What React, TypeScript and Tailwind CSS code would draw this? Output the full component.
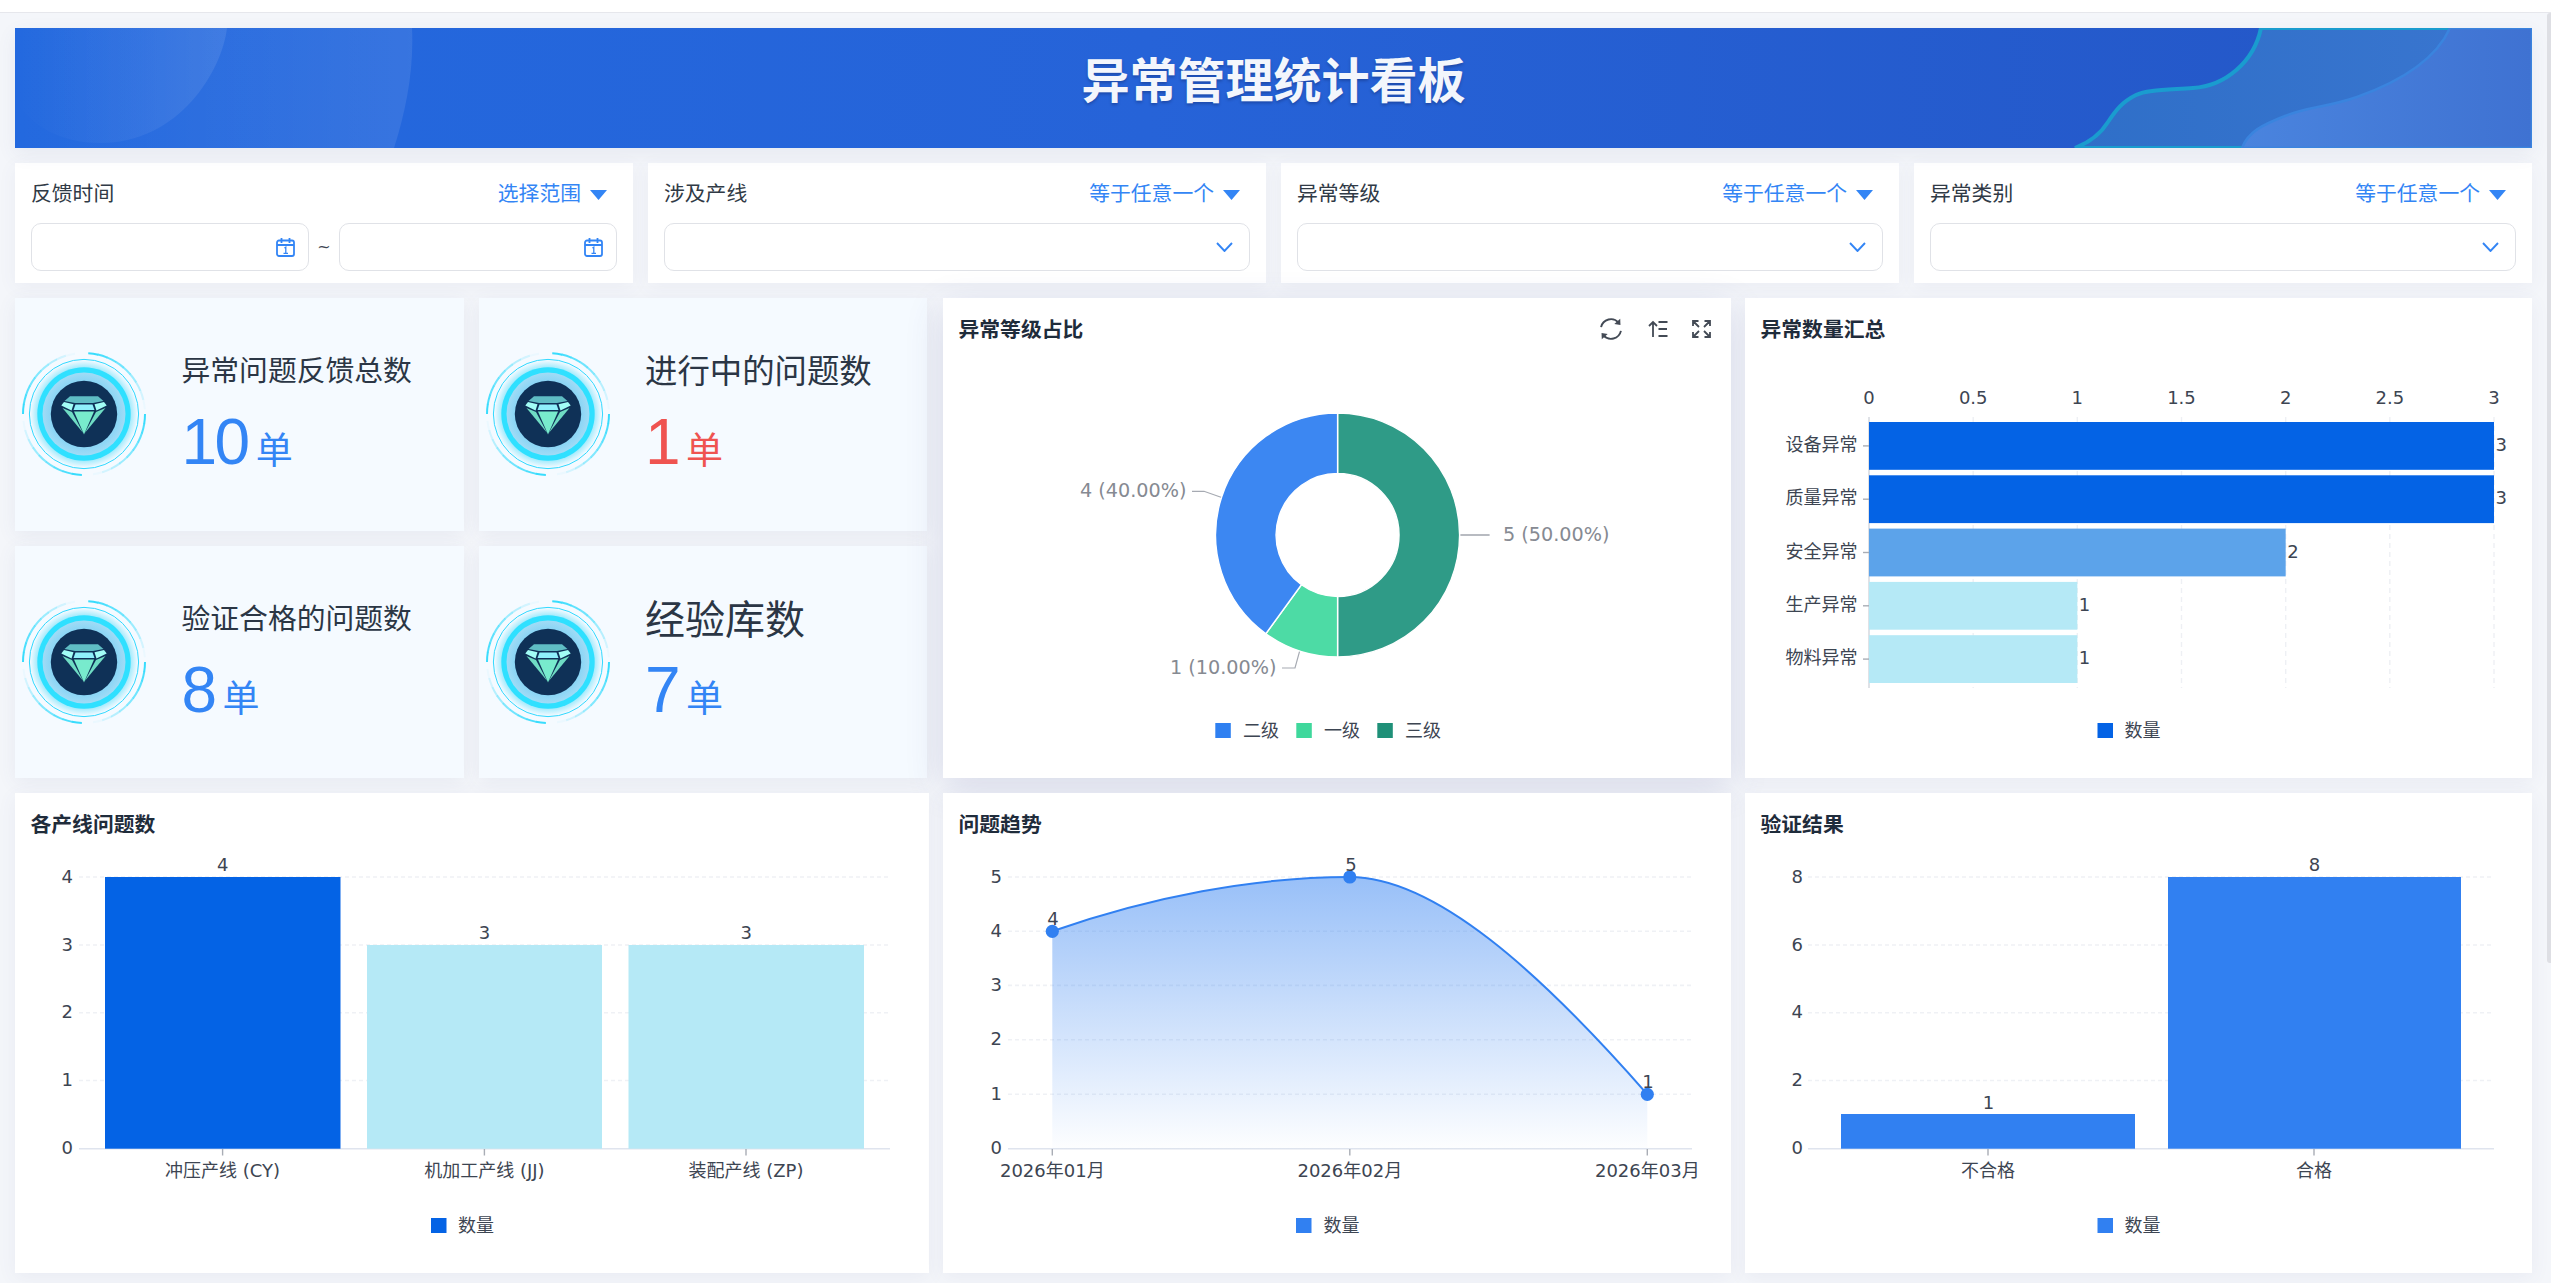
import React from "react";

const CYAN = "#38dcfd";
const BLUE = "#3180f1";
const AXIS_TEXT = "text-[18px] fill-[#3d4552]";

function polar(cx: number, cy: number, r: number, deg: number) {
  const a = ((deg - 90) * Math.PI) / 180;
  return [cx + r * Math.cos(a), cy + r * Math.sin(a)];
}

function arc(cx: number, cy: number, r: number, from: number, to: number) {
  const [x1, y1] = polar(cx, cy, r, from);
  const [x2, y2] = polar(cx, cy, r, to);
  return `M${x1} ${y1}A${r} ${r} 0 ${to - from > 180 ? 1 : 0} 1 ${x2} ${y2}`;
}

function donutSlice(cx: number, cy: number, r: number, r0: number, from: number, to: number) {
  const [x1, y1] = polar(cx, cy, r, from);
  const [x2, y2] = polar(cx, cy, r, to);
  const [x3, y3] = polar(cx, cy, r0, to);
  const [x4, y4] = polar(cx, cy, r0, from);
  const large = to - from > 180 ? 1 : 0;
  return `M${x1} ${y1}A${r} ${r} 0 ${large} 1 ${x2} ${y2}L${x3} ${y3}A${r0} ${r0} 0 ${large} 0 ${x4} ${y4}Z`;
}

function GemIcon() {
  const starts = [4, 90, 182, 270];
  return (
    <svg width="130" height="130" viewBox="-65 -65 130 130" className="shrink-0">
      <defs>
        <radialGradient id="gemGlow" gradientUnits="userSpaceOnUse" cx="0" cy="0" r="54">
          <stop offset="0.85" stopColor="#7fe4fb" stopOpacity="0.75" />
          <stop offset="1" stopColor="#7fe4fb" stopOpacity="0" />
        </radialGradient>
        <radialGradient id="gemInner" gradientUnits="userSpaceOnUse" cx="0" cy="0" r="42">
          <stop offset="0.75" stopColor="#85d4f5" />
          <stop offset="1" stopColor="#a3dcf6" />
        </radialGradient>
      </defs>
      {starts.map((s) =>
        [0, 1, 2, 3, 4, 5, 6, 7, 8].map((i) => (
          <path
            key={`${s}-${i}`}
            d={arc(0, 0, 61, s + i * 9, s + (i + 1) * 9 + 0.5)}
            fill="none"
            stroke={CYAN}
            strokeWidth="2"
            opacity={i < 4 ? 1 - i * 0.1 : 0.75 - (i - 3) * 0.14}
          />
        ))
      )}
      <circle r="54.6" fill="none" stroke="#2fd9ff" strokeWidth="1" />
      <circle r="54" fill="url(#gemGlow)" />
      <circle r="46.7" fill="#2fe0ff" />
      <circle r="41.5" fill="url(#gemInner)" />
      <circle r="33.2" fill="#0f3157" />
      <polygon points="-14,-17.7 14,-17.7 19.5,-13 9,-11 -9,-11 -19.5,-13" fill="#5fbdc4" />
      <polygon points="-8.5,-9.5 8.5,-9.5 10.5,-4 -10.5,-4" fill="#8ff0fb" />
      <polygon points="-20,-12 -10.5,-9.8 -12.5,-3.5 -22.7,-8.5" fill="#a2fdf6" />
      <polygon points="20,-12 10.5,-9.8 12.5,-3.5 22.7,-8.5" fill="#a2fdf6" />
      <polygon points="-21.5,-6 -12,-2 -0.8,19" fill="#6fdcc4" />
      <polygon points="21.5,-6 12,-2 0.8,19" fill="#6fdcc4" />
      <polygon points="-10,-2.4 10,-2.4 0,20.5" fill="#78ebcd" />
    </svg>
  );
}

function KpiCard({ title, size, value, red }: { title: string; size: string; value: string; red?: boolean }) {
  return (
    <div className="flex items-center bg-[#f5faff] pl-[4px] shadow-[0_4px_18px_rgba(80,90,140,0.08)]">
      <GemIcon />
      <div className="ml-[32.5px] mt-[51px] flex flex-col self-start">
        <div className={`flex h-[46px] items-center text-[#2b3645] ${size}`}>{title}</div>
        <div className={`mt-[12px] flex items-baseline font-['Liberation_Sans','Noto_Sans_CJK_SC',sans-serif] ${red ? "text-[#ef5350]" : "text-[#3385f5]"}`}>
          <span className="text-[64px] leading-[70px] tracking-[-2.5px]">{value}</span>
          <span className="ml-[8px] text-[37px] leading-none">单</span>
        </div>
      </div>
    </div>
  );
}

function CalendarIcon() {
  return (
    <svg width="19" height="20" viewBox="0 0 19 20" fill="none" stroke="#3385f5" strokeWidth="1.8" className="shrink-0">
      <rect x="1" y="3.5" width="17" height="15.5" rx="2" />
      <path d="M1 8h17M5.5 1v5M13.5 1v5" />
      <path d="M8.4 11l1.4-.8v6M7.5 16.4h4.5" strokeWidth="1.3" />
    </svg>
  );
}

function Chevron() {
  return (
    <svg width="17" height="10" viewBox="0 0 17 10" fill="none" stroke="#3385f5" strokeWidth="1.9" className="shrink-0">
      <path d="M1 1l7.500 8L16 1" />
    </svg>
  );
}

function DateBox() {
  return (
    <div className="flex h-[48px] w-[278px] items-center justify-end rounded-[10px] border-[1.6px] border-[#e0e2e7] bg-white pr-[13px]">
      <CalendarIcon />
    </div>
  );
}

function FilterCard({ label, op, children }: { label: string; op: string; children: React.ReactNode }) {
  return (
    <div className="flex h-[120px] flex-col bg-white px-[16px] shadow-[0_4px_18px_rgba(80,90,140,0.06)]">
      <div className="flex h-[60px] items-center justify-between pt-[4px] text-[20.8px]">
        <span className="text-[#303a46]">{label}</span>
        <span className="mr-[10px] flex items-center gap-[9px] text-[#3385f5]">
          {op}
          <svg width="17" height="10" viewBox="0 0 17 10" className="shrink-0">
            <path d="M0 0h17L8.5 10z" fill="#3385f5" />
          </svg>
        </span>
      </div>
      {children}
    </div>
  );
}

function SelectBox() {
  return (
    <div className="flex h-[48px] items-center justify-end rounded-[10px] border-[1.6px] border-[#e0e2e7] bg-white pr-[16px]">
      <Chevron />
    </div>
  );
}

function ChartCard({
  title, x, y, w, h, glow, icons, children,
}: {
  title: string; x: number; y: number; w: number; h: number; glow?: boolean; icons?: React.ReactNode; children: React.ReactNode;
}) {
  return (
    <div
      className={`flex h-full shrink-0 flex-col bg-white ${glow ? "shadow-[0_10px_36px_rgba(60,70,140,0.16)]" : "shadow-[0_4px_18px_rgba(80,90,140,0.07)]"} ${w === 914 ? "w-[914px]" : w === 788 ? "w-[788px]" : "w-[787px]"}`}
    >
      <div className="flex h-[62px] shrink-0 items-center justify-between pl-[15.5px] pr-[20px] pt-[3px] text-[20.8px] font-bold text-[#1f2c3b]">
        {title}
        {icons}
      </div>
      <svg width={w} height={h - 62} viewBox={`${x} ${y + 62} ${w} ${h - 62}`} className="block">
        {children}
      </svg>
    </div>
  );
}

function Legend({ x, y, color, label, textX }: { x: number; y: number; color: string; label: string; textX: number }) {
  return (
    <g>
      <rect x={x} y={y} width="15.5" height="15" fill={color} />
      <text x={textX} y={y + 7.5} dominantBaseline="central" className={AXIS_TEXT}>{label}</text>
    </g>
  );
}

function HGrid({ ys, x1, x2, labels, lx }: { ys: number[]; x1: number; x2: number; labels: string[]; lx: number }) {
  return (
    <g>
      {ys.map((y, i) => (
        <g key={y}>
          {i < ys.length - 1 && <line x1={x1} x2={x2} y1={y} y2={y} stroke="#eff1f5" strokeWidth="1.6" strokeDasharray="4 3" />}
          <text x={lx} y={y - 1} textAnchor="end" dominantBaseline="central" className={AXIS_TEXT}>{labels[i]}</text>
        </g>
      ))}
      <line x1={x1} x2={x2} y1={ys[ys.length - 1]} y2={ys[ys.length - 1]} stroke="#dfe4ee" strokeWidth="1.6" />
    </g>
  );
}

function XTick({ x, label }: { x: number; label: string }) {
  return (
    <g>
      <line x1={x} x2={x} y1="1149" y2="1155.5" stroke="#a9adb5" strokeWidth="1.4" />
      <text x={x} y="1170.5" textAnchor="middle" dominantBaseline="central" className={AXIS_TEXT}>{label}</text>
    </g>
  );
}

function Value({ x, y, children, anchor = "middle" }: { x: number; y: number; children: string; anchor?: "middle" | "start" }) {
  return (
    <text x={x} y={y} textAnchor={anchor} dominantBaseline="central" className={AXIS_TEXT}>{children}</text>
  );
}

function LineChartBars() {
  const bars = [
    { x: 105, w: 235.5, y: 877, c: "#0463e5", v: "4" },
    { x: 367, w: 235, y: 945, c: "#b5e9f6", v: "3" },
    { x: 628.5, w: 235.5, y: 945, c: "#b5e9f6", v: "3" },
  ];
  return (
    <ChartCard title="各产线问题数" x={15} y={793} w={914} h={480}>
      <HGrid ys={[877, 945, 1012.7, 1080.5, 1148.7]} x1={79} x2={890} labels={["4", "3", "2", "1", "0"]} lx={73} />
      {bars.map((b, i) => (
        <g key={i}>
          <rect x={b.x} y={b.y} width={b.w} height={1148.7 - b.y} fill={b.c} />
          <Value x={b.x + b.w / 2} y={b.y - 13}>{b.v}</Value>
        </g>
      ))}
      <XTick x={222.6} label="冲压产线 (CY)" />
      <XTick x={484.4} label="机加工产线 (JJ)" />
      <XTick x={746} label="装配产线 (ZP)" />
      <Legend x={431} y={1218} color="#0463e5" label="数量" textX={458} />
    </ChartCard>
  );
}

function TrendChart() {
  const line = "M1052.3 931.3C1150 897 1255 877 1349.8 877C1435 877 1540 972 1647.3 1094.3";
  return (
    <ChartCard title="问题趋势" x={943} y={793} w={788} h={480}>
      <defs>
        <linearGradient id="trendFill" gradientUnits="userSpaceOnUse" x1="0" x2="0" y1="877" y2="1149">
          <stop offset="0" stopColor={BLUE} stopOpacity="0.5" />
          <stop offset="1" stopColor={BLUE} stopOpacity="0.01" />
        </linearGradient>
      </defs>
      <HGrid ys={[877, 931.3, 985.4, 1039.7, 1094.3, 1148.7]} x1={1008} x2={1692} labels={["5", "4", "3", "2", "1", "0"]} lx={1002} />
      <path d={`${line}V1148.7H1052.3Z`} fill="url(#trendFill)" />
      <path d={line} fill="none" stroke={BLUE} strokeWidth="2" />
      <circle cx="1052.3" cy="931.3" r="6.6" fill={BLUE} />
      <circle cx="1349.8" cy="877" r="6.6" fill={BLUE} />
      <circle cx="1647.3" cy="1094.3" r="6.6" fill={BLUE} />
      <Value x={1053} y={918}>4</Value>
      <Value x={1351} y={864}>5</Value>
      <Value x={1648} y={1081.5}>1</Value>
      <XTick x={1052.3} label="2026年01月" />
      <XTick x={1349.8} label="2026年02月" />
      <XTick x={1647.3} label="2026年03月" />
      <Legend x={1296} y={1218} color={BLUE} label="数量" textX={1323.5} />
    </ChartCard>
  );
}

function VerifyChart() {
  return (
    <ChartCard title="验证结果" x={1745} y={793} w={787} h={480}>
      <HGrid ys={[877, 945, 1012.7, 1080.5, 1148.7]} x1={1808} x2={2494} labels={["8", "6", "4", "2", "0"]} lx={1803} />
      <rect x="1841" y="1114" width="294" height="34.7" fill={BLUE} />
      <rect x="2168" y="877" width="293" height="271.7" fill={BLUE} />
      <Value x={1988.5} y={1102}>1</Value>
      <Value x={2314.5} y={864}>8</Value>
      <XTick x={1988} label="不合格" />
      <XTick x={2314} label="合格" />
      <Legend x={2097.5} y={1218} color={BLUE} label="数量" textX={2124.5} />
    </ChartCard>
  );
}

function CardTools() {
  return (
    <div className="-mt-[3px] flex items-center gap-[24px] font-normal text-[#434a55]">
      <svg width="26" height="26" viewBox="0 0 22 22" fill="none" stroke="currentColor" strokeWidth="1.6" className="shrink-0">
        <path d="M2.6 9.4A8.6 8.6 0 0 1 17.4 5.6" />
        <path d="M19.4 12.6A8.6 8.6 0 0 1 4.6 16.4" />
        <path d="M13.8 6.7l5.2 1L18.8 2.3z" fill="currentColor" stroke="none" />
        <path d="M8.2 15.3l-5.2-1 .2 5.4z" fill="currentColor" stroke="none" />
      </svg>
      <svg width="20" height="18" viewBox="0 0 20 18" fill="none" stroke="currentColor" strokeWidth="1.8" className="shrink-0">
        <path d="M5 17V2M1 6l4-4 4 4" />
        <path d="M10.5 2H19.5M10.5 9H19M10.5 16H19.5" />
      </svg>
      <svg width="19" height="18" viewBox="0 0 19 18" fill="none" stroke="currentColor" strokeWidth="1.8" className="shrink-0">
        <path d="M1 6V1h5.500M1 1l6 6M18 6V1h-5.500M18 1l-6 6M1 12v5h5.500M1 17l6-6M18 12v5h-5.500M18 17l-6-6" />
      </svg>
    </div>
  );
}

function DonutChart() {
  const cx = 1337.6;
  const cy = 535;
  const slices = [
    { from: 0, to: 180, c: "#2f9b87" },
    { from: 180, to: 216, c: "#4ddba5" },
    { from: 216, to: 360, c: "#3c87f2" },
  ];
  const label = "text-[19.2px] fill-[#868a92]";
  return (
    <ChartCard title="异常等级占比" x={943} y={298} w={788} h={480} glow icons={<CardTools />}>
      {slices.map((s) => (
        <path key={s.from} d={donutSlice(cx, cy, 122, 61.5, s.from, s.to)} fill={s.c} stroke="#fff" strokeWidth="1.4" />
      ))}
      <path d="M1460.400 535H1489.600" stroke="#a6aab2" strokeWidth="1.6" fill="none" />
      <path d="M1192 491.300H1204L1221 497.300" stroke="#a6aab2" strokeWidth="1.2" fill="none" />
      <path d="M1282 668H1295L1299.500 651.700" stroke="#a6aab2" strokeWidth="1.2" fill="none" />
      <text x="1503" y="534" dominantBaseline="central" className={label}>5 (50.00%)</text>
      <text x="1186.500" y="490" textAnchor="end" dominantBaseline="central" className={label}>4 (40.00%)</text>
      <text x="1276.500" y="667.500" textAnchor="end" dominantBaseline="central" className={label}>1 (10.00%)</text>
      <Legend x={1215.3} y={723} color="#2f80f1" label="二级" textX={1243} />
      <Legend x={1296.3} y={723} color="#3fd89c" label="一级" textX={1324} />
      <Legend x={1377.3} y={723} color="#1f9078" label="三级" textX={1405} />
    </ChartCard>
  );
}

function SummaryChart() {
  const xs = [1869, 1973.2, 2077.3, 2181.5, 2285.7, 2389.8, 2494];
  const ticks = ["0", "0.5", "1", "1.5", "2", "2.5", "3"];
  const rows = [
    { name: "设备异常", y: 422, v: 3, c: "#0463e5" },
    { name: "质量异常", y: 475.3, v: 3, c: "#0463e5" },
    { name: "安全异常", y: 528.6, v: 2, c: "#5ca3ea" },
    { name: "生产异常", y: 581.9, v: 1, c: "#b5e9f6" },
    { name: "物料异常", y: 635.2, v: 1, c: "#b5e9f6" },
  ];
  return (
    <ChartCard title="异常数量汇总" x={1745} y={298} w={787} h={480}>
      {xs.map((x, i) => (
        <g key={x}>
          {i > 0 && <line x1={x} x2={x} y1="417" y2="688" stroke="#eef0f4" strokeWidth="1.4" strokeDasharray="5 4" />}
          <Value x={x} y={397.5}>{ticks[i]}</Value>
        </g>
      ))}
      <line x1="1869" x2="1869" y1="417" y2="688" stroke="#dcdfe5" strokeWidth="1.8" />
      {rows.map((r) => (
        <g key={r.name}>
          <rect x="1869" y={r.y} width={(r.v * 625) / 3} height="47.800" fill={r.c} />
          <line x1="1863" x2="1869" y1={r.y + 23.9} y2={r.y + 23.9} stroke="#a9adb5" strokeWidth="1.4" />
          <text x="1857.500" y={r.y + 22.5} textAnchor="end" dominantBaseline="central" className={AXIS_TEXT}>{r.name}</text>
          <Value x={1869 + (r.v * 625) / 3 + 1.5} y={r.y + 22.5} anchor="start">{String(r.v)}</Value>
        </g>
      ))}
      <Legend x={2097.5} y={723} color="#0463e5" label="数量" textX={2124.5} />
    </ChartCard>
  );
}

export default function App() {
  return (
    <div className="relative flex h-[1283px] w-full flex-col overflow-hidden bg-[#f4f6fa] font-['DejaVu_Sans','Noto_Sans_CJK_SC',sans-serif]">
      <div className="h-[13px] shrink-0 border-b-[1.5px] border-[#e6e7ec] bg-white" />
      <div className="flex w-[2532px] flex-col gap-[15px] pl-[15px] pt-[15px]">
        <div className="relative flex h-[120px] items-center justify-center overflow-hidden bg-[linear-gradient(90deg,#2369df_0%,#2663d8_45%,#2456c6_100%)] pb-[14px] shadow-[0_6px_18px_rgba(80,90,140,0.08)]">
          <svg className="absolute inset-0 h-full w-full" viewBox="15 28 2517 120" preserveAspectRatio="none">
            <defs>
              <linearGradient id="leftWash" x1="0" x2="1" y1="0" y2="0">
                <stop offset="0" stopColor="#fff" stopOpacity="0" />
                <stop offset="1" stopColor="#fff" stopOpacity="0.09" />
              </linearGradient>
              <linearGradient id="rightBand" x1="0" x2="1" y1="0" y2="0">
                <stop offset="0" stopColor="#2f6fc8" />
                <stop offset="1" stopColor="#3a76d0" />
              </linearGradient>
              <linearGradient id="rightTop" x1="0" x2="1" y1="0" y2="0">
                <stop offset="0" stopColor="#4a84de" />
                <stop offset="1" stopColor="#3f72d2" />
              </linearGradient>
            </defs>
            <path d="M15 28H412C414 70 406 110 394 148H15Z" fill="url(#leftWash)" />
            <path d="M15 28H227C222 70 180 143 100 143C60 143 30 125 15 100Z" fill="url(#leftWash)" />
            <path d="M2261 28C2254 62 2225 86 2193 88C2165 90 2146 90 2136 95C2122 102 2116 110 2108 122C2100 135 2088 143 2075 148H2532V28Z" fill="url(#rightBand)" stroke="#1a9ccf" strokeWidth="4" />
            <path d="M2450 28C2438 55 2410 78 2357 97C2325 108 2310 106 2285 116C2262 125 2248 132 2242 148H2532V28Z" fill="url(#rightTop)" stroke="#3a84de" strokeWidth="2.5" />
          </svg>
          <h1 className="relative text-[48px] font-bold text-[#f3f6fc] [text-shadow:0_2px_3px_rgba(0,0,40,0.25)]">异常管理统计看板</h1>
        </div>

        <div className="grid grid-cols-4 gap-[15px]">
          <FilterCard label="反馈时间" op="选择范围">
            <div className="flex items-center justify-between">
              <DateBox />
              <span className="text-[16px] text-[#3d4552]">~</span>
              <DateBox />
            </div>
          </FilterCard>
          <FilterCard label="涉及产线" op="等于任意一个"><SelectBox /></FilterCard>
          <FilterCard label="异常等级" op="等于任意一个"><SelectBox /></FilterCard>
          <FilterCard label="异常类别" op="等于任意一个"><SelectBox /></FilterCard>
        </div>

        <div className="flex h-[480px] gap-[14px]">
          <div className="mr-[2px] grid w-[912px] shrink-0 grid-cols-2 gap-[15px]">
            <KpiCard title="异常问题反馈总数" size="text-[28.8px]" value="10" />
            <KpiCard title="进行中的问题数" size="text-[32.4px]" value="1" red />
            <KpiCard title="验证合格的问题数" size="text-[28.8px]" value="8" />
            <KpiCard title="经验库数" size="text-[40px]" value="7" />
          </div>
          <DonutChart />
          <SummaryChart />
        </div>

        <div className="flex h-[480px] gap-[14px]">
          <LineChartBars />
          <TrendChart />
          <VerifyChart />
        </div>
      </div>
      <div className="absolute right-0 top-[13px] h-[950px] w-[4px] rounded-l-[3px] bg-[#dedfe4]" />
    </div>
  );
}
